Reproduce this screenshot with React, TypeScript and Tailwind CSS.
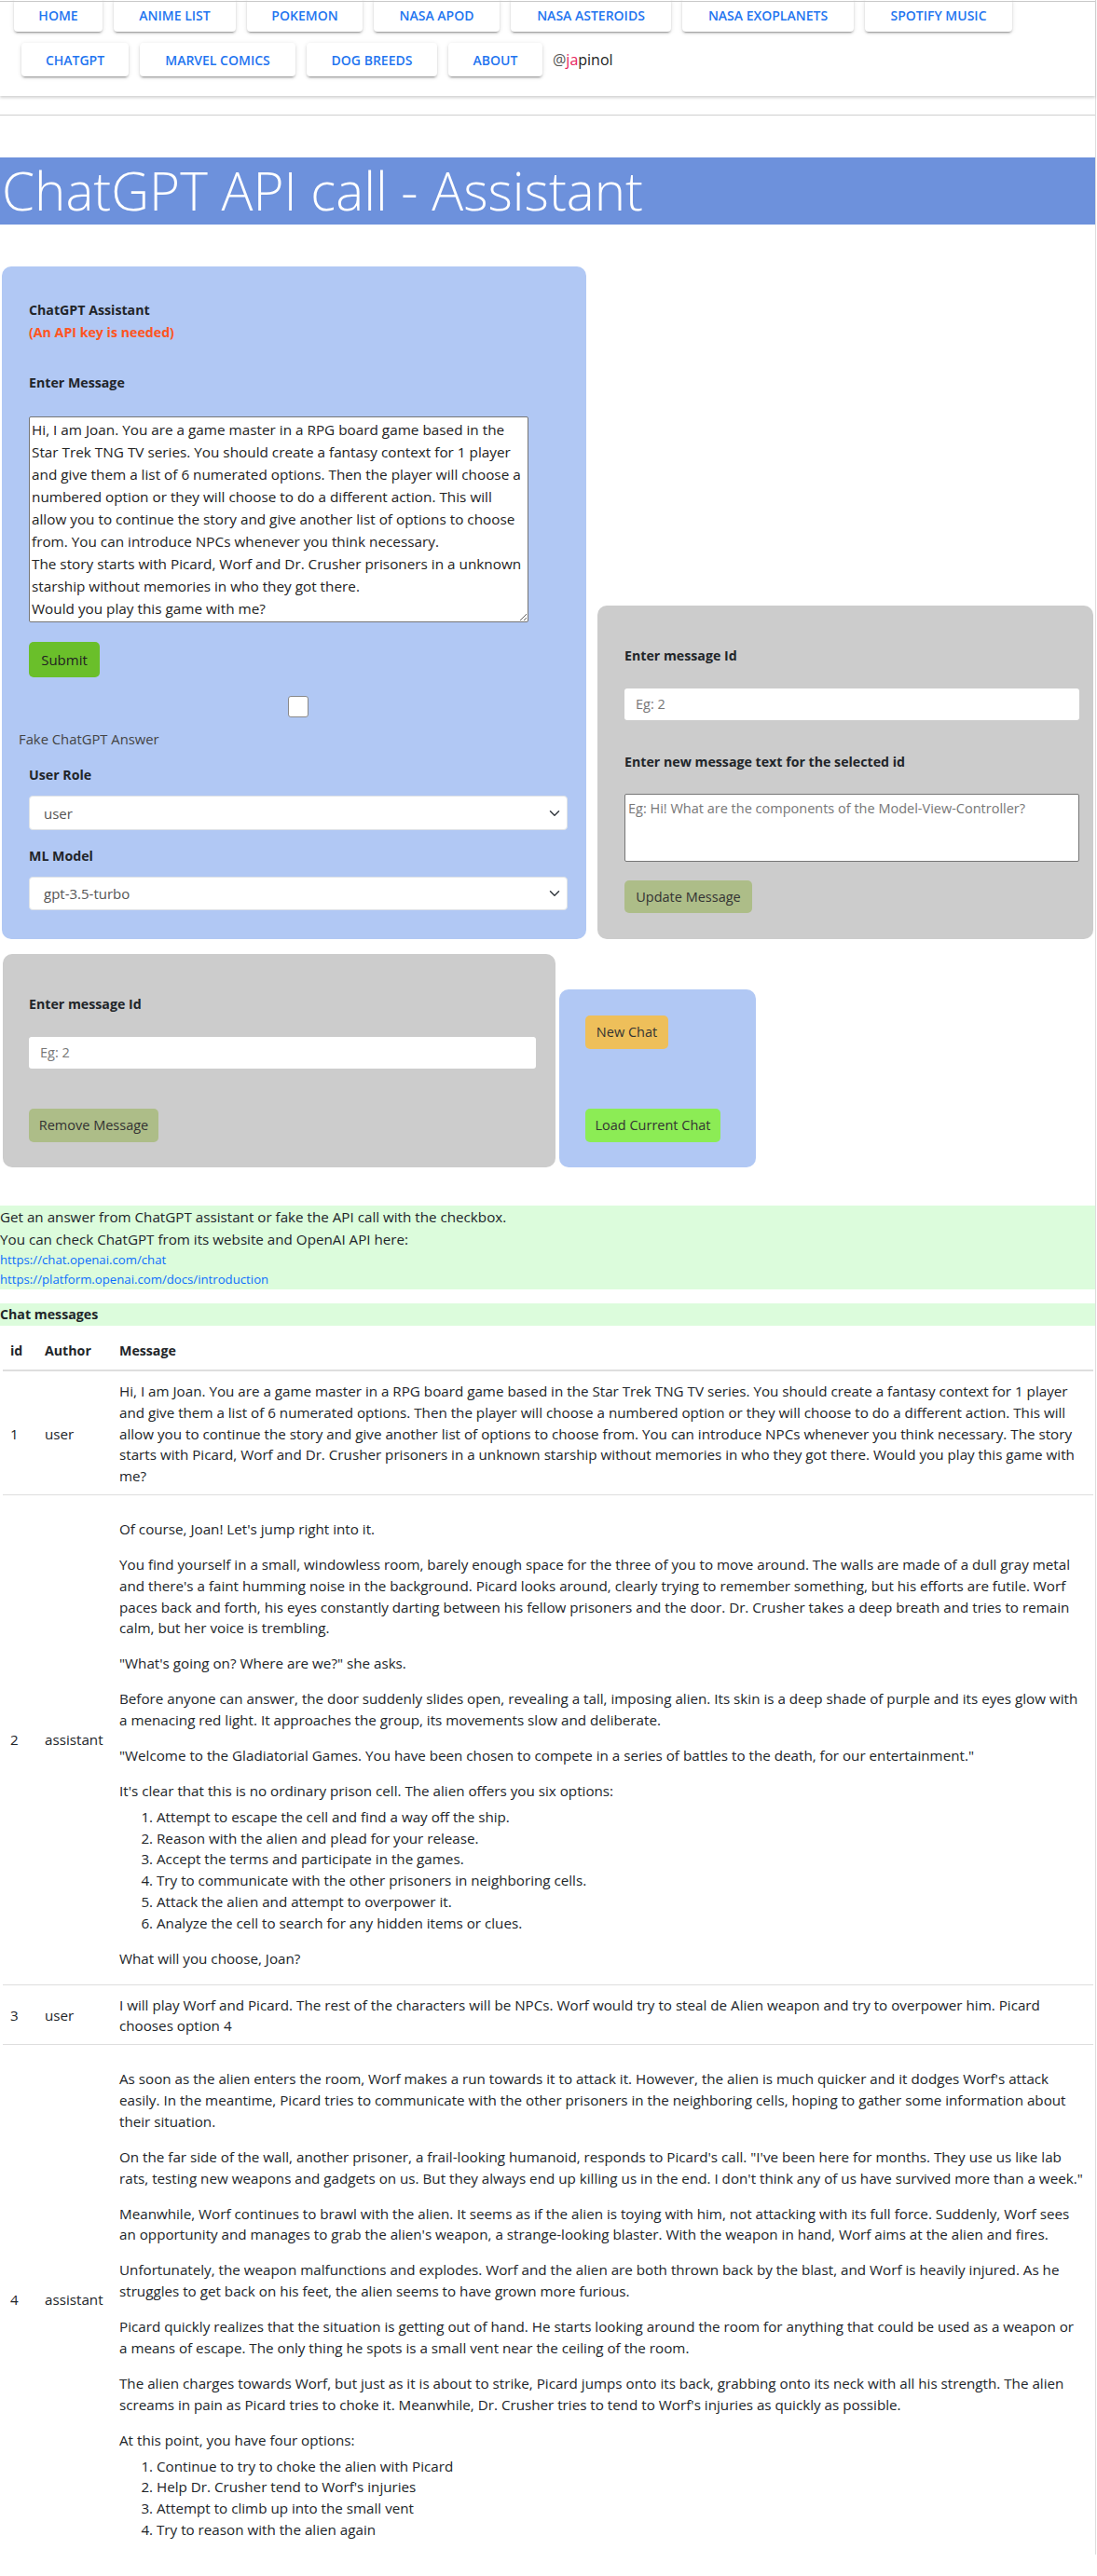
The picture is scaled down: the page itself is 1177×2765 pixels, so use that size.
import React from "react";

const navRow1 = [
  { t: "HOME", w: "w-[95px]" },
  { t: "ANIME LIST", w: "w-[131px]" },
  { t: "POKEMON", w: "w-[124px]" },
  { t: "NASA APOD", w: "w-[135px]" },
  { t: "NASA ASTEROIDS", w: "w-[172px]" },
  { t: "NASA EXOPLANETS", w: "w-[184px]" },
  { t: "SPOTIFY MUSIC", w: "w-[158px]" },
];
const navRow2 = [
  { t: "CHATGPT", w: "w-[115px]" },
  { t: "MARVEL COMICS", w: "w-[167px]" },
  { t: "DOG BREEDS", w: "w-[140px]" },
  { t: "ABOUT", w: "w-[101px]" },
];

function NavBtn({ t, w }: { t: string; w: string }) {
  return (
    <div
      className={`${w} h-[36px] flex items-center justify-center rounded-[4px] bg-white text-[14px] font-semibold text-[#1f75f0] shadow-[0_3px_1px_-2px_rgba(0,0,0,0.2),0_2px_2px_0_rgba(0,0,0,0.14),0_1px_5px_0_rgba(0,0,0,0.12)]`}
    >
      {t}
    </div>
  );
}

function Chevron() {
  return (
    <svg
      className="absolute right-[8px] top-1/2 -translate-y-1/2"
      width="12"
      height="12"
      viewBox="0 0 16 16"
      fill="none"
      stroke="#343a40"
      strokeWidth="2"
      strokeLinecap="round"
      strokeLinejoin="round"
    >
      <path d="M2 5l6 6 6-6" />
    </svg>
  );
}

const userMsg =
  "Hi, I am Joan. You are a game master in a RPG board game based in the Star Trek TNG TV series. You should create a fantasy context for 1 player and give them a list of 6 numerated options. Then the player will choose a numbered option or they will choose to do a different action. This will allow you to continue the story and give another list of options to choose from. You can introduce NPCs whenever you think necessary. The story starts with Picard, Worf and Dr. Crusher prisoners in a unknown starship without memories in who they got there. Would you play this game with me?";

const textareaLines = [
  "Hi, I am Joan. You are a game master in a RPG board game based in the",
  "Star Trek TNG TV series. You should create a fantasy context for 1 player",
  "and give them a list of 6 numerated options. Then the player will choose a",
  "numbered option or they will choose to do a different action. This will",
  "allow you to continue the story and give another list of options to choose",
  "from. You can introduce NPCs whenever you think necessary.",
  "The story starts with Picard, Worf and Dr. Crusher prisoners in a unknown",
  "starship without memories in who they got there.",
  "Would you play this game with me?",
];

function P({ children, last, beforeList }: { children: React.ReactNode; last?: boolean; beforeList?: boolean }) {
  return <p className={last ? "mb-[8px]" : beforeList ? "mb-[5px]" : "mb-[15.2px]"}>{children}</p>;
}

function OL({ items }: { items: string[] }) {
  return (
    <ol className="list-decimal pl-[40px] mb-[15.2px]">
      {items.map((i) => (
        <li key={i}>{i}</li>
      ))}
    </ol>
  );
}

export default function App() {
  return (
    <div className="w-[1177px] bg-white font-['Open_Sans',sans-serif] text-[#212529]">
      <div className="w-[1176px] border-r border-[#dddddd]">
        {/* NAV */}
        <div className="relative bg-white pb-[21px] shadow-[0_2px_3px_rgba(0,0,0,0.18)]">
          <div className="absolute left-0 right-0 top-[3px] z-10 h-px bg-[#c8c8c8]" />
          <div className="flex gap-[12px] pl-[15px] -mt-[2px]">
            {navRow1.map((b) => (
              <NavBtn key={b.t} {...b} />
            ))}
          </div>
          <div className="flex items-center gap-[12px] pl-[23px] mt-[12px]">
            {navRow2.map((b) => (
              <NavBtn key={b.t} {...b} />
            ))}
            <span className="ml-[-1px] text-[16px] text-[#222]">
              <span className="text-[#555]">@</span>
              <span className="text-[#e8245f]">ja</span>
              pinol
            </span>
          </div>
        </div>
        <div className="mt-[20px] h-px bg-[#cfcfcf]" />

        {/* TITLE */}
        <h1 className="mt-[45px] bg-[#6d91dc] pl-[2px] text-[56.5px] font-light leading-[72px] text-white">
          ChatGPT API call - Assistant
        </h1>

        {/* ROW 1 */}
        <div className="mt-[45px] flex items-end">
          <div className="ml-[2px] w-[627px] rounded-[10px] bg-[#b1c8f4] pt-[35px] pl-[29px] pr-[20px] pb-[31px] text-[14.8px] leading-[24px]">
            <p className="font-bold text-[14.2px]">ChatGPT Assistant</p>
            <p className="font-bold text-[14.2px] text-[#ff5420]">(An API key is needed)</p>
            <p className="mt-[30px] font-bold text-[14.2px]">Enter Message</p>
            <textarea
              wrap="off"
              className="mt-[24px] block h-[221px] w-[536px] overflow-hidden whitespace-pre rounded-[2px] border border-[#767676] bg-white px-[2px] py-[1px] text-[15.3px] leading-[24px] text-[#222] outline-none"
              defaultValue={textareaLines.join("\n")}
            />
            <button className="mt-[21px] block h-[38px] w-[76px] rounded-[5px] bg-[#6abf2a] text-[15px] text-[#222]">
              Submit
            </button>
            <div className="mt-[20px] ml-[278px] h-[23px] w-[22px] rounded-[3px] border border-[#8a8a8a] bg-white" />
            <p className="mt-[11px] -ml-[11px] text-[#444]">Fake ChatGPT Answer</p>
            <p className="mt-[15px] font-bold text-[14.2px]">User Role</p>
            <div className="relative mt-[10px] w-[578px]">
              <div className="flex h-[37px] items-center rounded-[4px] border border-[#dee2e6] bg-white pl-[15px] text-[15px] text-[#555]">
                user
              </div>
              <Chevron />
            </div>
            <p className="mt-[16px] font-bold text-[14.2px]">ML Model</p>
            <div className="relative mt-[10px] w-[578px]">
              <div className="flex h-[36px] items-center rounded-[4px] border border-[#dee2e6] bg-white pl-[15px] text-[15px] text-[#555]">
                gpt-3.5-turbo
              </div>
              <Chevron />
            </div>
          </div>

          <div className="ml-[12px] w-[532px] rounded-[10px] bg-[#cccccc] pt-[42px] pl-[29px] pr-[15px] pb-[28px] text-[14.5px] leading-[24px]">
            <p className="font-bold text-[14.2px]">Enter message Id</p>
            <div className="mt-[23px] flex h-[34px] items-center rounded-[3px] bg-white pl-[12px] text-[#777]">Eg: 2</div>
            <p className="mt-[33px] font-bold text-[14.2px]">Enter new message text for the selected id</p>
            <div className="mt-[22px] h-[73px] rounded-[2px] border border-[#767676] bg-white px-[3px] py-[3px] text-[#777]">
              Eg: Hi! What are the components of the Model-View-Controller?
            </div>
            <button className="mt-[20px] block h-[35px] w-[137px] rounded-[5px] bg-[#adbd88] text-[14.5px] text-[#333]">
              Update Message
            </button>
          </div>
        </div>

        {/* ROW 2 */}
        <div className="mt-[16px] flex items-end">
          <div className="ml-[3px] w-[593px] rounded-[10px] bg-[#cccccc] pt-[42px] pl-[28px] pr-[21px] pb-[27px] text-[14.5px] leading-[24px]">
            <p className="font-bold text-[14.2px]">Enter message Id</p>
            <div className="mt-[23px] flex h-[34px] items-center rounded-[3px] bg-white pl-[12px] text-[#777]">Eg: 2</div>
            <button className="mt-[43px] block h-[36px] w-[139px] rounded-[5px] bg-[#adbd88] text-[14.5px] text-[#333]">
              Remove Message
            </button>
          </div>
          <div className="ml-[4px] w-[211px] rounded-[10px] bg-[#b1c8f4] pt-[28px] pl-[28px] pb-[27px] text-[14.5px] leading-[24px]">
            <button className="block h-[36px] w-[89px] rounded-[5px] bg-[#eebf5a] text-[#333]">New Chat</button>
            <button className="mt-[64px] block h-[36px] w-[145px] rounded-[5px] bg-[#8cec55] text-[#333]">
              Load Current Chat
            </button>
          </div>
        </div>

        {/* INFO */}
        <div className="mt-[41px] bg-[#dcfcdc]">
          <p className="text-[15.2px] leading-[24px]">Get an answer from ChatGPT assistant or fake the API call with the checkbox.</p>
          <p className="text-[15.2px] leading-[24px]">You can check ChatGPT from its website and OpenAI API here:</p>
          <p className="text-[13.2px] leading-[21px] text-[#0d6efd]">https://chat.openai.com/chat</p>
          <p className="text-[13.2px] leading-[21px] text-[#0d6efd]">https://platform.openai.com/docs/introduction</p>
        </div>

        <div className="mt-[15px] bg-[#dcfcdc] text-[14.2px] font-bold leading-[24px]">Chat messages</div>

        {/* TABLE */}
        <table className="ml-[3px] mt-[7px] w-[1170px] border-collapse text-[15.2px] leading-[22.8px]">
          <thead>
            <tr className="border-b-2 border-[#dedede]">
              <th className="w-[37px] px-[8px] py-[8px] text-left font-bold leading-[24px] text-[14.2px]">id</th>
              <th className="w-[80px] px-[8px] py-[8px] text-left font-bold leading-[24px] text-[14.2px]">Author</th>
              <th className="px-[8px] py-[8px] text-left font-bold leading-[24px] text-[14.2px]">Message</th>
            </tr>
          </thead>
          <tbody>
            <tr className="border-b border-[#dedede]">
              <td className="px-[8px] pt-[10px] pb-[8px] align-middle">1</td>
              <td className="px-[8px] pt-[10px] pb-[8px] align-middle">user</td>
              <td className="px-[8px] pt-[10px] pb-[8px]">{userMsg}</td>
            </tr>
            <tr className="border-b border-[#dedede]">
              <td className="px-[8px] align-middle">2</td>
              <td className="px-[8px] align-middle">assistant</td>
              <td className="px-[8px] pt-[25px] pb-[8px]">
                <P>Of course, Joan! Let's jump right into it.</P>
                <P>
                  You find yourself in a small, windowless room, barely enough space for the three of you to move around. The walls are made of a dull gray metal and there's a faint humming noise in the background. Picard looks around, clearly trying to remember something, but his efforts are futile. Worf paces back and forth, his eyes constantly darting between his fellow prisoners and the door. Dr. Crusher takes a deep breath and tries to remain calm, but her voice is trembling.
                </P>
                <P>"What's going on? Where are we?" she asks.</P>
                <P>
                  Before anyone can answer, the door suddenly slides open, revealing a tall, imposing alien. Its skin is a deep shade of purple and its eyes glow with a menacing red light. It approaches the group, its movements slow and deliberate.
                </P>
                <P>
                  "Welcome to the Gladiatorial Games. You have been chosen to compete in a series of battles to the death, for our entertainment."
                </P>
                <P beforeList>It's clear that this is no ordinary prison cell. The alien offers you six options:</P>
                <OL
                  items={[
                    "Attempt to escape the cell and find a way off the ship.",
                    "Reason with the alien and plead for your release.",
                    "Accept the terms and participate in the games.",
                    "Try to communicate with the other prisoners in neighboring cells.",
                    "Attack the alien and attempt to overpower it.",
                    "Analyze the cell to search for any hidden items or clues.",
                  ]}
                />
                <P last>What will you choose, Joan?</P>
              </td>
            </tr>
            <tr className="border-b border-[#dedede]">
              <td className="px-[8px] pt-[10px] pb-[8px] align-middle">3</td>
              <td className="px-[8px] pt-[10px] pb-[8px] align-middle">user</td>
              <td className="px-[8px] pt-[10px] pb-[8px]">
                I will play Worf and Picard. The rest of the characters will be NPCs. Worf would try to steal de Alien weapon and try to overpower him. Picard chooses option 4
              </td>
            </tr>
            <tr>
              <td className="px-[8px] align-middle">4</td>
              <td className="px-[8px] align-middle">assistant</td>
              <td className="px-[8px] pt-[25px] pb-[0px]">
                <P>
                  As soon as the alien enters the room, Worf makes a run towards it to attack it. However, the alien is much quicker and it dodges Worf's attack easily. In the meantime, Picard tries to communicate with the other prisoners in the neighboring cells, hoping to gather some information about their situation.
                </P>
                <P>
                  On the far side of the wall, another prisoner, a frail-looking humanoid, responds to Picard's call. "I've been here for months. They use us like lab rats, testing new weapons and gadgets on us. But they always end up killing us in the end. I don't think any of us have survived more than a week."
                </P>
                <P>
                  Meanwhile, Worf continues to brawl with the alien. It seems as if the alien is toying with him, not attacking with its full force. Suddenly, Worf sees an opportunity and manages to grab the alien's weapon, a strange-looking blaster. With the weapon in hand, Worf aims at the alien and fires.
                </P>
                <P>
                  Unfortunately, the weapon malfunctions and explodes. Worf and the alien are both thrown back by the blast, and Worf is heavily injured. As he struggles to get back on his feet, the alien seems to have grown more furious.
                </P>
                <P>
                  Picard quickly realizes that the situation is getting out of hand. He starts looking around the room for anything that could be used as a weapon or a{"\u00a0"}means of escape. The only thing he spots is a small vent near the ceiling of the room.
                </P>
                <P>
                  The alien charges towards Worf, but just as it is about to strike, Picard jumps onto its back, grabbing onto its neck with all his strength. The alien screams in pain as Picard tries to choke it. Meanwhile, Dr. Crusher tries to tend to Worf's injuries as quickly as possible.
                </P>
                <P beforeList>At this point, you have four options:</P>
                <OL
                  items={[
                    "Continue to try to choke the alien with Picard",
                    "Help Dr. Crusher tend to Worf's injuries",
                    "Attempt to climb up into the small vent",
                    "Try to reason with the alien again",
                  ]}
                />
              </td>
            </tr>
          </tbody>
        </table>
      </div>
    </div>
  );
}
